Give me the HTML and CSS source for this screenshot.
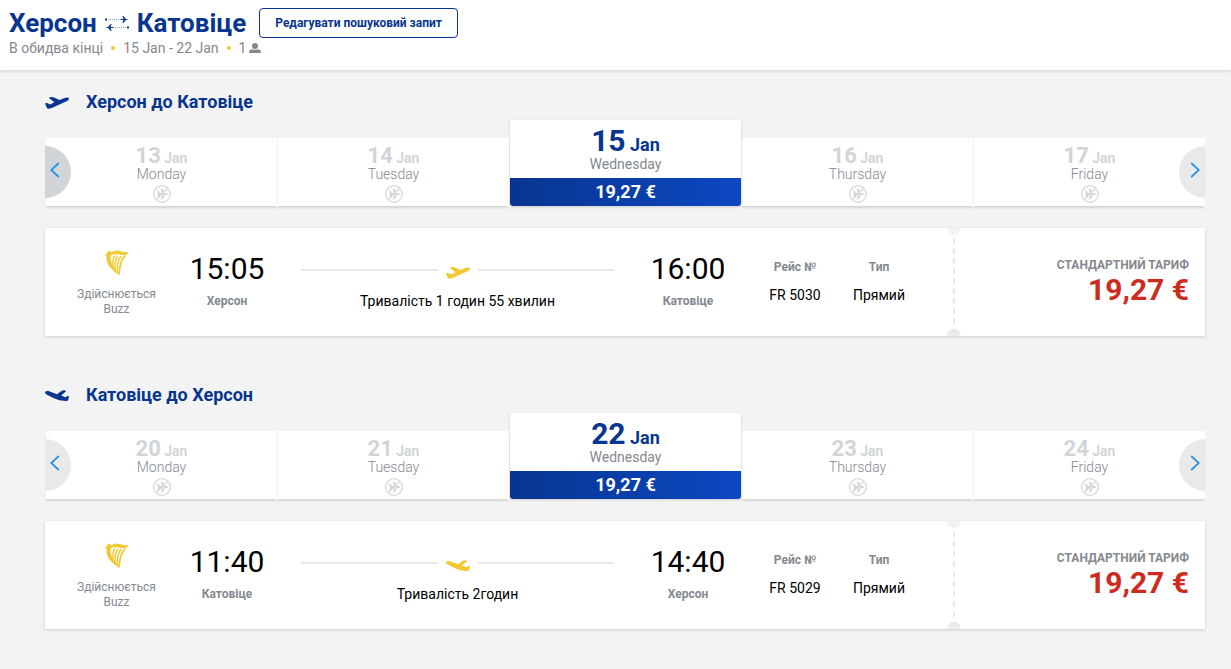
FILE: index.html
```html
<!DOCTYPE html>
<html lang="uk">
<head>
<meta charset="utf-8">
<meta name="viewport" content="width=device-width, initial-scale=1">
<title>Херсон – Катовіце</title>
<link rel="stylesheet" href="styles.css">
</head>
<body>
<svg class="sprite" aria-hidden="true">
  <symbol id="takeoff" viewBox="0 0 24 12"><path d="M0 6.300 2 6 5 7.600 9.400 5.300 4 1Q4.500 0 6.500 0 8 0 9 .5L14.500 3 19.500 1Q23.300 0 24 1.500 24.200 3 21.500 4.300L9.500 9.800Q5 12 2.500 11.600 1.500 11.200 1.300 9.500Z"/></symbol>
  <symbol id="landing" viewBox="0 0 24 12"><path d="M0 2.500Q0 1 2 1L3.500 1 12 4.300 16 1.200Q18 0 20.500 .5L21 1.200 16.200 5.400 20.500 7.200 22.800 5.800 24 6.500 23.300 9.800Q22.600 11.500 20.500 11 14 10.800 9 8.300L1.500 4.500Q.2 3.700 0 2.500Z"/></symbol>
  <symbol id="nofly" viewBox="0 0 18 18"><circle cx="9" cy="9" r="8.300" fill="none" stroke="currentColor" stroke-width="1.200"/><path d="M4.300 5.800H5.500L7 8H8.600L8 3.700H9.600L11.800 8H13.800Q15.300 8.400 15.300 9T13.800 10H11.800L9.600 14.300H8L8.600 10H7L5.500 12.200H4.300L5 9Z"/><path d="M3.800 15.500 15.500 3.800" stroke="#fff"/><path d="M3.100 14.900 14.900 3.100" stroke="currentColor" stroke-width="1.200"/></symbol>
  <symbol id="harp" viewBox="0 0 24 25"><path d="M0 4.500 2.200 3.300Q2 .8 4 .7 6 .7 5.800 2.500 11-.8 15.500 1.300 19.500 3 24 1.900 22.500 5.300 17 5 10 3.600 6.300 5 4.500 8 6.500 12.500L14.500 25Q6.500 20.500 2.700 13.500 1 10 1.800 6.800Z"/><path d="M21.200 5.300Q18 9.500 16.500 13.500L14.500 25 13 23.500 14.800 13.200Q16.200 8.500 19 5.400Z"/><g fill="none" stroke="currentColor" stroke-width="1.400"><path d="M10.300 5.500Q6.800 9 8.300 14.800M13 5.800Q9.500 10 10.300 18M16 6Q12 12 12.300 21.500"/></g></symbol>
  <symbol id="prev" viewBox="0 0 10 16"><path d="M8.800 1 1.200 8 8.800 15" fill="none" stroke="currentColor" stroke-width="1.700"/></symbol>
  <symbol id="next" viewBox="0 0 10 16"><path d="M1.200 1 8.800 8 1.200 15" fill="none" stroke="currentColor" stroke-width="1.700"/></symbol>
</svg>

<header class="header">
  <div class="trip">
    <h1 class="route">Херсон
      <svg class="route-arrows" viewBox="0 0 24 14" aria-hidden="true"><path d="M1 3.500H18M6 11.500H23" stroke="currentColor" stroke-dasharray="1 1" opacity=".5"/><path d="M0 2.500H2V4.500H0ZM22 10.500H24V12.500H22ZM16 3H18.500L17.300 0H18.300L21 3 24 3.500 21 4 18.300 7H17.300L18.500 4H16ZM8 11H5.500L6.700 8H5.700L3 11 0 11.500 3 12 5.700 15H6.700L5.500 12H8Z"/></svg>
      Катовіце</h1>
    <button class="edit" type="button">Редагувати пошуковий запит</button>
  </div>
  <p class="summary"><span>В обидва кінці</span><i class="dot"></i><span>15 Jan - 22 Jan</span><i class="dot"></i><span class="pax">1 <svg class="person" viewBox="0 0 12 10" aria-hidden="true"><circle cx="6" cy="3" r="3"/><path d="M0 9Q0 6.500 3.500 6.200 6 7.500 8.500 6.200 12 6.500 12 9 12 10 11 10H1Q0 10 0 9Z"/></svg></span></p>
</header>

<main class="flights">
  <section class="journey">
    <h2 class="journey-title"><svg class="plane" aria-hidden="true"><use href="#takeoff"/></svg>Херсон до Катовіце</h2>
    <div class="carousel">
      <button class="day" type="button"><span class="date"><b>13</b> Jan</span><span class="weekday">Monday</span><svg class="nofly"><use href="#nofly"/></svg></button>
      <button class="day" type="button"><span class="date"><b>14</b> Jan</span><span class="weekday">Tuesday</span><svg class="nofly"><use href="#nofly"/></svg></button>
      <button class="day selected" type="button"><span class="date"><b>15</b> Jan</span><span class="weekday">Wednesday</span><span class="day-price">19,27 €</span></button>
      <button class="day" type="button"><span class="date"><b>16</b> Jan</span><span class="weekday">Thursday</span><svg class="nofly"><use href="#nofly"/></svg></button>
      <button class="day" type="button"><span class="date"><b>17</b> Jan</span><span class="weekday">Friday</span><svg class="nofly"><use href="#nofly"/></svg></button>
      <button class="arrow prev active" type="button" aria-label="Назад"><svg><use href="#prev"/></svg></button>
      <button class="arrow next" type="button" aria-label="Далі"><svg><use href="#next"/></svg></button>
    </div>
    <article class="ticket">
      <div class="info">
        <div class="carrier"><svg class="harp"><use href="#harp"/></svg><span>Здійснюється<br>Buzz</span></div>
        <div class="stop"><span class="time">15:05</span><span class="label">Херсон</span></div>
        <div class="leg"><div class="track"><svg class="plane"><use href="#takeoff"/></svg></div><span class="value">Тривалість 1 годин 55 хвилин</span></div>
        <div class="stop"><span class="time">16:00</span><span class="label">Катовіце</span></div>
        <div class="details">
          <div class="detail"><span class="label">Рейс №</span><span class="value">FR 5030</span></div>
          <div class="detail"><span class="label">Тип</span><span class="value">Прямий</span></div>
        </div>
      </div>
      <div class="fare"><span class="fare-name">СТАНДАРТНИЙ ТАРИФ</span><span class="fare-price">19,27 €</span></div>
    </article>
  </section>

  <section class="journey">
    <h2 class="journey-title"><svg class="plane" aria-hidden="true"><use href="#landing"/></svg>Катовіце до Херсон</h2>
    <div class="carousel">
      <button class="day" type="button"><span class="date"><b>20</b> Jan</span><span class="weekday">Monday</span><svg class="nofly"><use href="#nofly"/></svg></button>
      <button class="day" type="button"><span class="date"><b>21</b> Jan</span><span class="weekday">Tuesday</span><svg class="nofly"><use href="#nofly"/></svg></button>
      <button class="day selected" type="button"><span class="date"><b>22</b> Jan</span><span class="weekday">Wednesday</span><span class="day-price">19,27 €</span></button>
      <button class="day" type="button"><span class="date"><b>23</b> Jan</span><span class="weekday">Thursday</span><svg class="nofly"><use href="#nofly"/></svg></button>
      <button class="day" type="button"><span class="date"><b>24</b> Jan</span><span class="weekday">Friday</span><svg class="nofly"><use href="#nofly"/></svg></button>
      <button class="arrow prev" type="button" aria-label="Назад"><svg><use href="#prev"/></svg></button>
      <button class="arrow next" type="button" aria-label="Далі"><svg><use href="#next"/></svg></button>
    </div>
    <article class="ticket">
      <div class="info">
        <div class="carrier"><svg class="harp"><use href="#harp"/></svg><span>Здійснюється<br>Buzz</span></div>
        <div class="stop"><span class="time">11:40</span><span class="label">Катовіце</span></div>
        <div class="leg"><div class="track"><svg class="plane"><use href="#landing"/></svg></div><span class="value">Тривалість 2годин</span></div>
        <div class="stop"><span class="time">14:40</span><span class="label">Херсон</span></div>
        <div class="details">
          <div class="detail"><span class="label">Рейс №</span><span class="value">FR 5029</span></div>
          <div class="detail"><span class="label">Тип</span><span class="value">Прямий</span></div>
        </div>
      </div>
      <div class="fare"><span class="fare-name">СТАНДАРТНИЙ ТАРИФ</span><span class="fare-price">19,27 €</span></div>
    </article>
  </section>
</main>
</body>
</html>
```
FILE: styles.css
```css
* { box-sizing: border-box; }

body {
  margin: 0;
  background: #f3f3f3;
  color: #000;
  font-family: Roboto, sans-serif;
  font-size: 14px;
  line-height: 16px;
}

button {
  font: inherit;
  color: inherit;
  cursor: pointer;
}

svg { fill: currentColor; }
.sprite { position: absolute; width: 0; height: 0; }

/* Header */
.header {
  padding: 8px 9px 14px;
  background: #fff;
  box-shadow: 0 1px 3px rgba(0, 0, 0, .16);
}

.trip { display: flex; gap: 13px; }

.route {
  display: flex;
  align-items: center;
  gap: 8px;
  margin: 0;
  color: #073590;
  font-size: 26px;
  font-weight: 700;
  line-height: 30px;
}
.route-arrows { width: 24px; height: 14px; overflow: visible; }

.summary {
  display: flex;
  align-items: center;
  gap: 8px;
  margin: 2px 0 0;
  color: #84898f;
  line-height: 16px;
}
.dot { width: 4px; height: 4px; border-radius: 50%; background: #f1c933; }
.pax { display: flex; align-items: center; gap: 3px; }
.person { width: 12px; height: 10px; }

.edit {
  height: 30px;
  padding: 0 15px;
  border: 1px solid #073590;
  border-radius: 4px;
  background: #fff;
  color: #073590;
  font-size: 12px;
  font-weight: 700;
}

/* Journeys */
.flights { padding: 22px 26px 0 45px; }
.journey { margin-bottom: 49px; }

.journey-title {
  display: flex;
  align-items: center;
  gap: 17px;
  margin: 0 0 8px;
  color: #073590;
  font-size: 18px;
  font-weight: 700;
  line-height: 20px;
}
.plane { width: 24px; height: 12px; }
.journey-title .plane { margin-top: 2px; }

.carousel {
  position: relative;
  display: grid;
  grid-template-columns: repeat(5, 1fr);
  align-items: end;
}

.day {
  display: flex;
  flex-direction: column;
  align-items: center;
  height: 68px;
  padding: 7px 0 0;
  border: 0;
  border-left: 1px solid #f3f3f3;
  background: #fff;
  box-shadow: 0 3px 2px -1px rgba(0, 0, 0, .12);
  color: #d1d5d8;
}
.date { height: 21px; font-weight: 700; line-height: 21px; }
.date b { font-size: 22px; font-weight: 700; }
.weekday { color: #84898f; font-weight: 300; line-height: 16px; }
.nofly { width: 18px; height: 18px; margin-top: 3px; }

.day.selected {
  z-index: 1;
  height: 86px;
  padding-top: 6px;
  border: 0;
  border-radius: 3px;
  margin-left: 1px;
  overflow: hidden;
  color: #073590;
  box-shadow: 0 1px 3px rgba(0, 0, 0, .16);
}
.selected .date { height: 30px; font-size: 18px; line-height: 30px; }
.selected .date b { font-size: 30px; }
.selected .weekday { font-weight: 400; }
.day-price {
  align-self: stretch;
  margin-top: auto;
  background: linear-gradient(to right, #073590, #0d48c2);
  color: #fff;
  font-size: 18px;
  font-weight: 700;
  line-height: 28px;
}

.arrow {
  position: absolute;
  z-index: 2;
  top: 26px;
  display: flex;
  align-items: center;
  width: 26px;
  height: 52px;
  padding: 0 5px 4px;
  border: 0;
  background: #e9e9e9;
  color: #2091eb;
}
.arrow svg { width: 10px; height: 16px; }
.prev { left: 0; border-radius: 0 26px 26px 0; }
.next { right: 0; justify-content: flex-end; border-radius: 26px 0 0 26px; }
.arrow.active { background: #d1d5d8; }

/* Ticket */
.ticket {
  position: relative;
  display: flex;
  margin-top: 22px;
  min-height: 108px;
  background: #fff;
  box-shadow: 0 1px 3px rgba(0, 0, 0, .16);
}
.ticket::before,
.ticket::after {
  content: "";
  position: absolute;
  right: 244px;
  width: 14px;
  height: 7px;
  background: #f3f3f3;
}
.ticket::before { top: 0; border-radius: 0 0 7px 7px; }
.ticket::after {
  bottom: 0;
  border-radius: 7px 7px 0 0;
  background: linear-gradient(#e4e4e4, #f0f0f0);
}

.info {
  flex: 1;
  display: grid;
  grid-template-columns: 143px 78px 1fr 78px auto;
}

.carrier,
.stop,
.leg,
.detail {
  display: flex;
  flex-direction: column;
  align-items: center;
  text-align: center;
}

.carrier {
  padding-top: 22px;
  color: #84898f;
  font-size: 12px;
  line-height: 15px;
}
.harp { width: 24px; height: 25px; margin-bottom: 12px; color: #f1c933; }

.stop { padding-top: 24px; }
.time { font-size: 30px; line-height: 34px; }
.label { color: #84898f; font-size: 12px; font-weight: 700; line-height: 14px; }
.stop .label { margin-top: 8px; }

.leg { padding: 39px 35px 0; }
.track {
  display: flex;
  align-items: center;
  align-self: stretch;
  gap: 8px;
  margin-bottom: 14px;
  color: #f1c933;
}
.track::before,
.track::after {
  content: "";
  flex: 1;
  height: 2px;
  margin-bottom: 6px;
  background: #e9e9e9;
}

.details { display: flex; padding: 32px 32px 0 26px; }
.detail { width: 84px; }
.detail .value { margin-top: 13px; }

.fare {
  display: flex;
  flex-direction: column;
  align-items: flex-end;
  width: 252px;
  padding: 30px 16px 0 0;
  background: repeating-linear-gradient(#e9e9e9 0 6px, #fff 6px 10px) left 10px / 2px 88px no-repeat;
}
.fare-name { color: #84898f; font-size: 12px; font-weight: 700; line-height: 14px; }
.fare-price { color: #ce2b1f; font-size: 30px; font-weight: 700; line-height: 36px; }
```
